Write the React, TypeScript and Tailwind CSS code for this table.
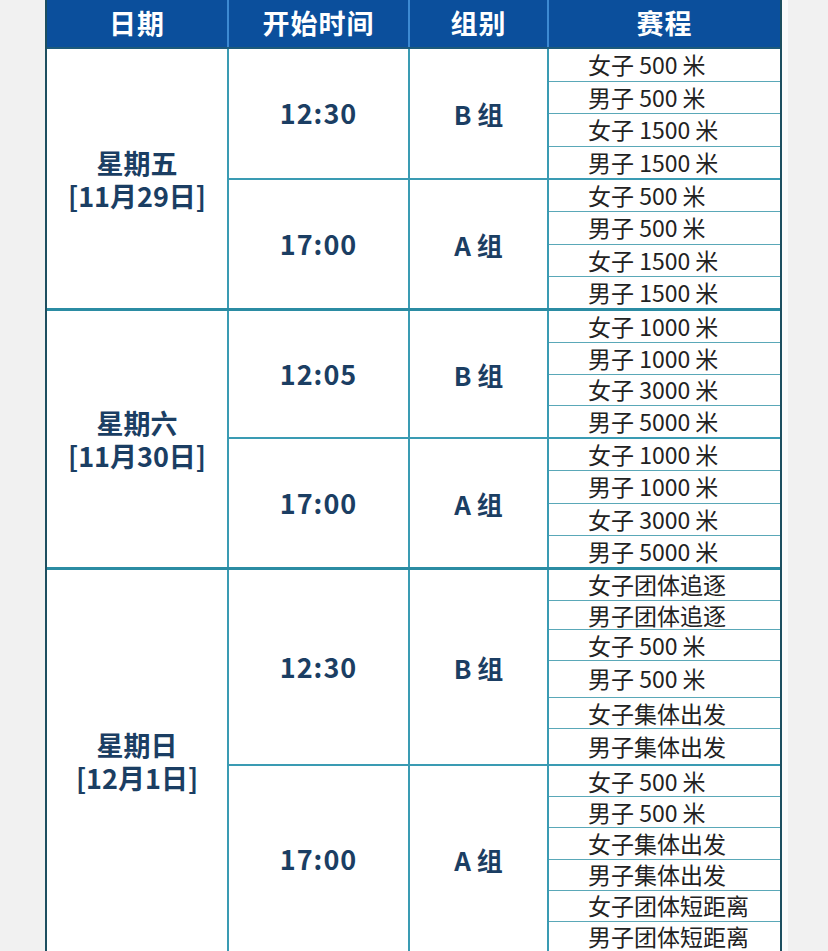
import React from "react";

type Session = {
  time: string;
  group: string;
  events: string[];
  heights?: number[];
  h: number;
};

type Day = {
  name: string;
  date: string;
  sessions: Session[];
};

const days: Day[] = [
  {
    name: "星期五",
    date: "[11月29日]",
    sessions: [
      { time: "12:30", group: "B 组", h: 131, events: ["女子 500 米", "男子 500 米", "女子 1500 米", "男子 1500 米"] },
      { time: "17:00", group: "A 组", h: 128, events: ["女子 500 米", "男子 500 米", "女子 1500 米", "男子 1500 米"] },
    ],
  },
  {
    name: "星期六",
    date: "[11月30日]",
    sessions: [
      { time: "12:05", group: "B 组", h: 128, events: ["女子 1000 米", "男子 1000 米", "女子 3000 米", "男子 5000 米"] },
      { time: "17:00", group: "A 组", h: 128, events: ["女子 1000 米", "男子 1000 米", "女子 3000 米", "男子 5000 米"] },
    ],
  },
  {
    name: "星期日",
    date: "[12月1日]",
    sessions: [
      {
        time: "12:30",
        group: "B 组",
        h: 196,
        heights: [31, 30, 31, 37, 32, 35],
        events: ["女子团体追逐", "男子团体追逐", "女子 500 米", "男子 500 米", "女子集体出发", "男子集体出发"],
      },
      {
        time: "17:00",
        group: "A 组",
        h: 186,
        events: ["女子 500 米", "男子 500 米", "女子集体出发", "男子集体出发", "女子团体短距离", "男子团体短距离"],
      },
    ],
  },
];

const font = { fontFamily: '"Noto Sans CJK SC", "Noto Sans", sans-serif' };

function SessionRow({ s, last }: { s: Session; last: boolean }) {
  return (
    <div
      className={`flex ${last ? "" : "border-b-2 border-[#3a9bb3]"}`}
      style={{ height: s.h }}
    >
      <div className="w-[181px] shrink-0 border-r-2 border-[#3a9bb3] flex items-center justify-center text-[27px] font-bold text-[#1b3e63] tracking-[1px]">
        {s.time}
      </div>
      <div className="w-[139px] shrink-0 border-r-2 border-[#3a9bb3] flex items-center justify-center text-[26px] font-bold text-[#1b3e63]">
        {s.group}
      </div>
      <div className="flex-1 flex flex-col min-h-0">
        {s.events.map((e, i) => (
          <div
            key={i}
            className={`flex items-center min-h-0 pl-[39px] text-[23px] leading-none text-[#222] ${s.heights ? "" : "flex-1 basis-0"} ${
              i < s.events.length - 1 ? "border-b border-[#5aa8b8]" : ""
            }`}
            style={s.heights ? { height: s.heights[i] } : undefined}
          >
            {e}
          </div>
        ))}
      </div>
    </div>
  );
}

export default function App() {
  return (
    <div className="w-[828px] h-[951px] overflow-hidden bg-[#f1f1f1]" style={font}>
      <div className="ml-[45px] w-[737px] bg-white border-x-2 border-[#1d4f60] shadow-[6px_0_0_#fbfbfb]">
        {/* header */}
        <div className="flex h-[49px] bg-[#0b4f9c] text-white font-bold text-[27px] border-b-2 border-[#1d5a7a]">
          <div className="w-[182px] shrink-0 border-r-2 border-[#3d8ad2] flex items-center justify-center tracking-[1px]">日期</div>
          <div className="w-[181px] shrink-0 border-r-2 border-[#3d8ad2] flex items-center justify-center tracking-[1px]">开始时间</div>
          <div className="w-[139px] shrink-0 border-r-2 border-[#3d8ad2] flex items-center justify-center tracking-[1px]">组别</div>
          <div className="flex-1 flex items-center justify-center tracking-[1px]">赛程</div>
        </div>
        {days.map((d, di) => (
          <div
            key={di}
            className={`flex ${di < days.length - 1 ? "border-b-[3px] border-[#2b8ca3]" : ""}`}
          >
            <div className="w-[182px] shrink-0 border-r-2 border-[#3a9bb3] flex flex-col items-center justify-center gap-[6px] text-[27px] font-bold text-[#1b3e63] leading-[27px]">
              <div>{d.name}</div>
              <div>{d.date}</div>
            </div>
            <div className="flex-1 flex flex-col">
              {d.sessions.map((s, si) => (
                <SessionRow key={si} s={s} last={si === d.sessions.length - 1} />
              ))}
            </div>
          </div>
        ))}
      </div>
    </div>
  );
}
